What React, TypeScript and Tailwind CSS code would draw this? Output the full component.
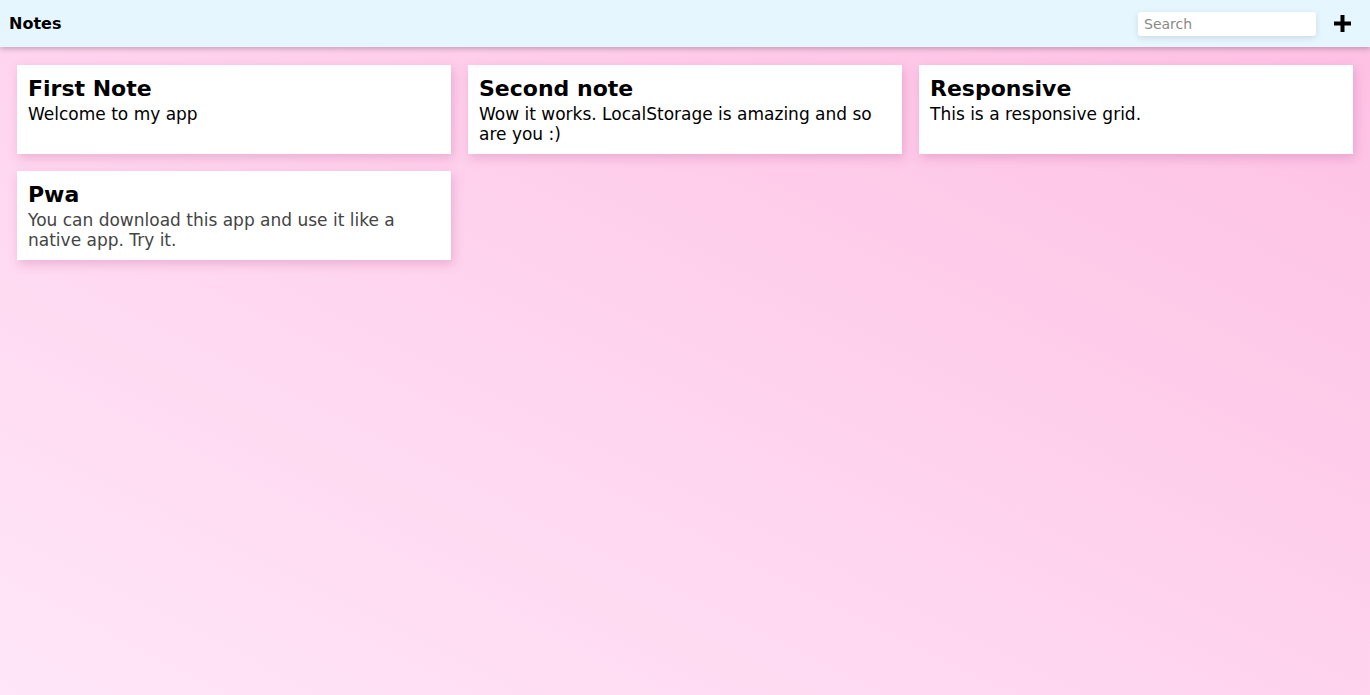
import React, { useState } from "react";

type Note = {
  title: string;
  body: string;
  muted?: boolean;
};

const initialNotes: Note[] = [
  { title: "First Note", body: "Welcome to my app" },
  {
    title: "Second note",
    body: "Wow it works. LocalStorage is amazing and so are you :)",
  },
  { title: "Responsive", body: "This is a responsive grid." },
  {
    title: "Pwa",
    body: "You can download this app and use it like a native app. Try it.",
    muted: true,
  },
];

const App: React.FC = () => {
  const [notes] = useState<Note[]>(initialNotes);
  const [search, setSearch] = useState<string>("");

  const filtered = notes.filter((n) =>
    (n.title + " " + n.body).toLowerCase().includes(search.toLowerCase())
  );

  return (
    <div className="min-h-[695px] bg-gradient-to-tr from-[#ffe6f8] to-[#fdbfe3] font-['DejaVu_Sans',sans-serif]">
      {/* Header */}
      <header className="h-[47px] bg-[#e6f6ff] flex items-center justify-between pl-[9px] pr-[19px] shadow-[0_2px_5px_rgba(0,0,0,0.22)] relative">
        <h1 className="text-[16px] font-bold text-black">Notes</h1>
        <div className="flex items-center">
          <input
            type="text"
            placeholder="Search"
            value={search}
            onChange={(e) => setSearch(e.target.value)}
            className="w-[178px] h-[24px] bg-white rounded-[3px] px-[6px] text-[14px] text-gray-700 placeholder:text-[#8a8a8a] outline-none shadow-[0_2px_6px_rgba(0,0,0,0.12)]"
          />
          <button className="ml-[18px] w-[17px] h-[17px] flex items-center justify-center">
            <svg width="17" height="17" viewBox="0 0 17 17">
              <rect x="6.5" y="0" width="4" height="17" fill="black" />
              <rect x="0" y="6.5" width="17" height="4" fill="black" />
            </svg>
          </button>
        </div>
      </header>

      {/* Notes grid */}
      <main className="grid grid-cols-3 gap-[17px] p-[17px] pt-[18px]">
        {filtered.map((note, i) => (
          <div
            key={i}
            className="bg-white h-[89px] px-[11px] pt-[9px] shadow-[2px_4px_10px_rgba(190,90,150,0.3)]"
          >
            <h2 className="text-[22px] leading-[30px] font-bold text-black">
              {note.title}
            </h2>
            <p
              className={`text-[17px] leading-[20px] ${
                note.muted ? "text-[#444]" : "text-black"
              }`}
            >
              {note.body}
            </p>
          </div>
        ))}
      </main>
    </div>
  );
};

export default App;
